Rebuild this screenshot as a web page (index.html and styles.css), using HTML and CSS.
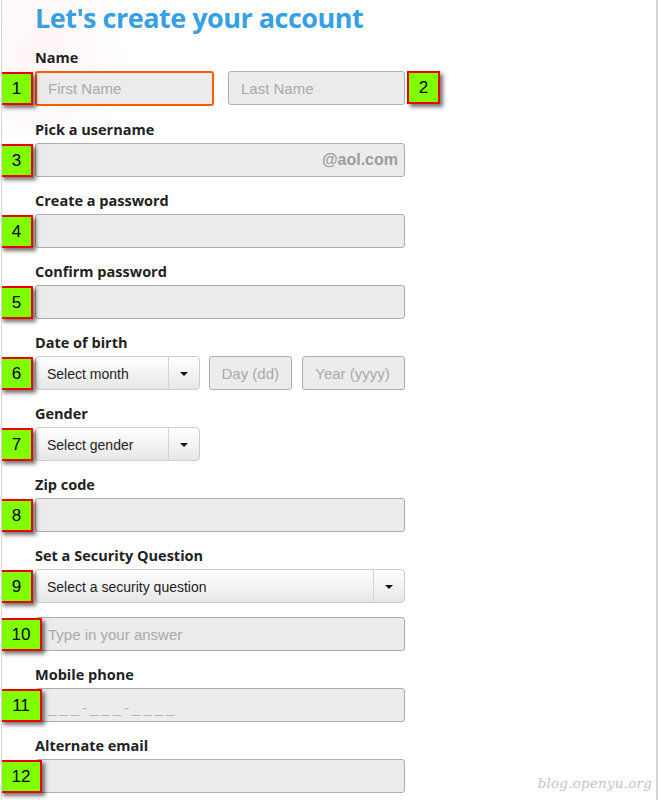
FILE: index.html
```html
<!DOCTYPE html>
<html>
<head>
<meta charset="utf-8">
<link rel="stylesheet" href="styles.css">
</head>
<body>
<div class="page">
  <div class="form">
    <h1 class="title">Let's create your account</h1>

    <div class="group">
      <div class="label">Name</div>
      <div class="row">
        <span class="badge b-left">1</span>
        <div class="input focus w-first"><span class="ph">First Name</span></div>
        <div class="input w-last"><span class="ph">Last Name</span></div>
        <span class="badge b-right">2</span>
      </div>
    </div>

    <div class="group">
      <div class="label">Pick a username</div>
      <div class="row">
        <span class="badge b-left">3</span>
        <div class="input full suffix-box"><span class="suffix">@aol.com</span></div>
      </div>
    </div>

    <div class="group">
      <div class="label">Create a password</div>
      <div class="row">
        <span class="badge b-left">4</span>
        <div class="input full"></div>
      </div>
    </div>

    <div class="group">
      <div class="label">Confirm password</div>
      <div class="row">
        <span class="badge b-left">5</span>
        <div class="input full"></div>
      </div>
    </div>

    <div class="group">
      <div class="label">Date of birth</div>
      <div class="row dob">
        <span class="badge b-left">6</span>
        <div class="select w-month"><span class="sel-text">Select month</span><span class="caret"></span></div>
        <div class="input w-day"><span class="ph">Day (dd)</span></div>
        <div class="input w-year"><span class="ph">Year (yyyy)</span></div>
      </div>
    </div>

    <div class="group">
      <div class="label">Gender</div>
      <div class="row">
        <span class="badge b-left">7</span>
        <div class="select w-month"><span class="sel-text">Select gender</span><span class="caret"></span></div>
      </div>
    </div>

    <div class="group">
      <div class="label">Zip code</div>
      <div class="row">
        <span class="badge b-left">8</span>
        <div class="input full"></div>
      </div>
    </div>

    <div class="group">
      <div class="label">Set a Security Question</div>
      <div class="row">
        <span class="badge b-left">9</span>
        <div class="select full"><span class="sel-text">Select a security question</span><span class="caret"></span></div>
      </div>
      <div class="row answer">
        <span class="badge b-left wide">10</span>
        <div class="input full"><span class="ph">Type in your answer</span></div>
      </div>
    </div>

    <div class="group">
      <div class="label">Mobile phone</div>
      <div class="row">
        <span class="badge b-left wide">11</span>
        <div class="input full"><span class="ph mask">___-___-____</span></div>
      </div>
    </div>

    <div class="group">
      <div class="label">Alternate email</div>
      <div class="row">
        <span class="badge b-left wide">12</span>
        <div class="input full"></div>
      </div>
    </div>
  </div>
  <div class="watermark">blog.openyu.org</div>
</div>
</body>
</html>
```

FILE: styles.css
```css
html, body {
  margin: 0;
  padding: 0;
  background: #fff;
}
.page {
  position: relative;
  width: 654px;
  height: 800px;
  overflow: hidden;
  border-left: 1px solid #d6d6d6;
  border-right: 2px solid #d6d6d6;
  margin-left: 1px;
  background:
    radial-gradient(ellipse 130px 150px at 40px 60px, rgba(255, 200, 210, 0.18), rgba(255, 255, 255, 0) 70%),
    #fff;
}
.form {
  padding-left: 33px;
  width: 370px;
}
.title {
  margin: 0 0 12px 0;
  font-family: "Open Sans", sans-serif;
  font-weight: 700;
  font-size: 27px;
  line-height: 36px;
  color: #36a0e3;
  letter-spacing: -0.5px;
}
.group {
  margin-bottom: 14.05px;
}
.label {
  font-family: "Open Sans", sans-serif;
  font-weight: 700;
  font-size: 14.5px;
  line-height: 20px;
  color: #222;
  margin-bottom: 3px;
}
.row {
  position: relative;
  display: flex;
  align-items: flex-start;
  gap: 14px;
}
.row.dob {
  gap: 9px;
}
.row.answer {
  margin-top: 14px;
}
.input {
  box-sizing: border-box;
  height: 34px;
  background: #ececec;
  border: 1px solid #adadad;
  border-radius: 3px;
  display: flex;
  align-items: center;
  padding-left: 12px;
  font-family: "Liberation Sans", Arial, sans-serif;
  font-size: 15px;
}
.input.focus {
  border: 2px solid #ff5a00;
  padding-left: 11px;
  height: 35px;
}
.ph {
  color: #a9a9a9;
}
.ph.mask {
  letter-spacing: 3px;
  color: #b5b5b5;
  margin-top: 4px;
}
.full { width: 370px; }
.w-first { width: 179px; }
.w-last { width: 177px; }
.w-month { width: 165px; }
.w-day { width: 84px; }
.w-year { width: 103px; margin-left: 1px; }
.suffix-box {
  justify-content: flex-end;
  padding-right: 6px;
}
.suffix {
  color: #9c9c9c;
  font-weight: 700;
  font-size: 16px;
}
.select {
  box-sizing: border-box;
  height: 34px;
  border: 1px solid #cdcdcd;
  border-radius: 4px;
  background: linear-gradient(#ffffff, #e7e7e7);
  display: flex;
  align-items: center;
  font-family: "Liberation Sans", Arial, sans-serif;
  font-size: 14px;
  color: #222;
}
.sel-text {
  flex: 1;
  padding-left: 11px;
  padding-top: 2px;
}
.caret {
  width: 30px;
  align-self: stretch;
  border-left: 1px solid #d4d4d4;
  display: flex;
  align-items: center;
  justify-content: center;
}
.caret::after {
  content: "";
  width: 0;
  height: 0;
  border-left: 4px solid transparent;
  border-right: 4px solid transparent;
  border-top: 4px solid #111;
  margin-top: 2px;
}
.badge {
  position: absolute;
  top: 1px;
  box-sizing: border-box;
  width: 33px;
  height: 33px;
  background: #80ff00;
  border: 2px solid #f00000;
  box-shadow: 3px 3px 4px rgba(0, 0, 0, 0.55);
  font-family: "Liberation Sans", Arial, sans-serif;
  font-size: 17px;
  color: #000;
  display: flex;
  align-items: center;
  justify-content: center;
  z-index: 2;
}
.badge.b-left {
  left: -35px;
}
.badge.b-left.wide {
  width: 42px;
}
.badge.b-right {
  left: 372px;
  top: 0;
}
.watermark {
  position: absolute;
  right: 4px;
  bottom: 9px;
  font-family: "DejaVu Serif", serif;
  font-style: italic;
  font-size: 13.5px;
  color: #c4c4c4;
  letter-spacing: 0.2px;
}
```
